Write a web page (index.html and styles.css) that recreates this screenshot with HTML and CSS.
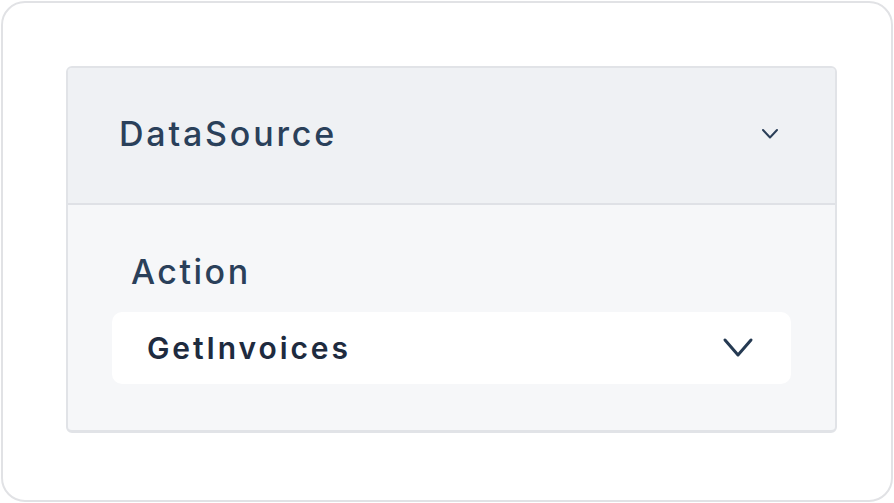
FILE: index.html
```html
<!DOCTYPE html>
<html>
<head>
<meta charset="utf-8">
<link rel="stylesheet" href="styles.css">
</head>
<body>
<div class="frame">
  <div class="card">
    <div class="card-header">
      <span class="title">DataSource</span>
      <svg class="chev-small" width="18" height="12" viewBox="0 0 18 12"><path d="M2 2 L9 9.5 L16 2" fill="none" stroke="#2b3f58" stroke-width="2" stroke-linecap="round" stroke-linejoin="round"/></svg>
    </div>
    <div class="card-body">
      <div class="label">Action</div>
      <div class="select">
        <span class="value">GetInvoices</span>
        <svg class="chev" width="32" height="22" viewBox="0 0 32 22"><path d="M3 3 L16 18 L29 3" fill="none" stroke="#253a52" stroke-width="3" stroke-linecap="round" stroke-linejoin="round"/></svg>
      </div>
    </div>
  </div>
</div>
</body>
</html>
```
FILE: styles.css
```css
* { box-sizing: border-box; }
html, body { margin: 0; padding: 0; background: #ffffff; }
body { font-family: Inter, "Noto Sans", sans-serif; }
.frame {
  margin: 1px;
  width: 892px;
  height: 501px;
  border: 2px solid #e1e2e5;
  border-radius: 24px;
  background: #ffffff;
  padding: 63px 0 0 63px;
}
.card {
  width: 771px;
  border: 2px solid #e1e3e7;
  border-bottom-width: 3px;
  border-radius: 6px;
  overflow: hidden;
  background: #f6f7f9;
}
.card-header {
  height: 137px;
  background: #eff1f4;
  border-bottom: 2px solid #dfe1e6;
  display: flex;
  align-items: center;
  justify-content: space-between;
  padding: 0 56px 4px 51px;
}
.title {
  font-size: 34px;
  font-weight: 500;
  letter-spacing: 2.8px;
  color: #2a405a;
}
.card-body {
  padding: 47px 44px 46px 44px;
}
.label {
  font-size: 34px;
  font-weight: 500;
  letter-spacing: 2.5px;
  color: #2a405a;
  padding-left: 19px;
  line-height: 40px;
}
.select {
  margin-top: 20px;
  height: 72px;
  background: #ffffff;
  border-radius: 10px;
  display: flex;
  align-items: center;
  justify-content: space-between;
  padding: 0 37px 0 35px;
}
.value {
  font-size: 30px;
  font-weight: 560;
  letter-spacing: 2.9px;
  color: #1e2b3f;
}
```
